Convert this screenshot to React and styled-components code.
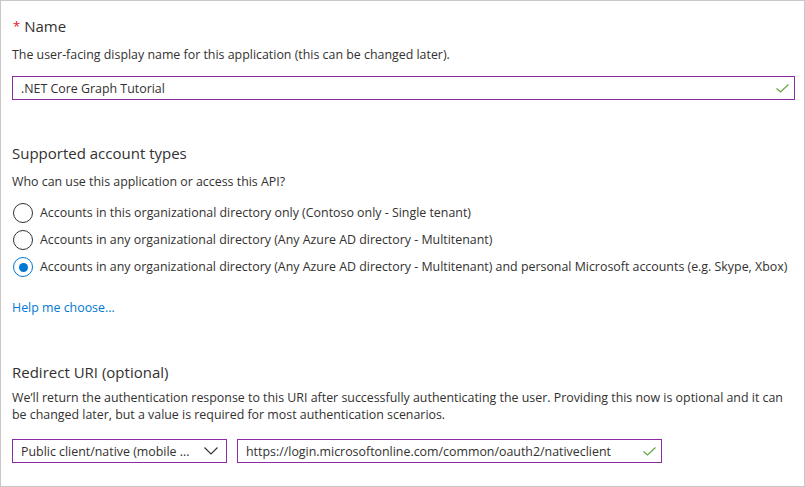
import React from "react";
import styled, { createGlobalStyle } from "styled-components";

//Styles//
const GlobalStyle = createGlobalStyle`
  html, body {
    margin: 0;
    padding: 0;
    background: #ffffff;
  }
  body {
    font-family: "Open Sans", "Noto Sans", Arial, sans-serif;
    color: #323130;
  }
`;

const Frame = styled.div`
  width: 805px;
  height: 487px;
  box-sizing: border-box;
  border: 1px solid #c8c8c8;
  padding: 0 9px 0 11px;
  display: flex;
  flex-direction: column;
`;

const Section = styled.section`
  display: flex;
  flex-direction: column;
  margin-top: ${(p) => p.$top}px;
`;

const Title = styled.h2`
  margin: 0;
  font-size: 15px;
  font-weight: 400;
  line-height: 20px;
  color: #323130;
  display: flex;
  align-items: center;
`;

const Required = styled.span`
  color: #e81123;
  font-size: 13px;
  margin-right: 4px;
  margin-left: 1px;
`;

const Desc = styled.p`
  margin: ${(p) => p.$top}px 0 0;
  font-size: 12.4px;
  line-height: 17px;
  color: #323130;
`;

const TextField = styled.div`
  box-sizing: border-box;
  height: 24px;
  width: ${(p) => (p.$width ? `${p.$width}px` : "100%")};
  margin-top: ${(p) => p.$top || 0}px;
  border: 1px solid #8a2da5;
  display: flex;
  align-items: center;
  justify-content: space-between;
  padding: 0 5px 0 8px;
  font-size: 12.4px;
  color: #323130;
`;

const Check = () => (
  <svg width="13" height="9" viewBox="0 0 13 9">
    <polyline
      points="0.5,4.5 4.5,8 12.5,0.5"
      fill="none"
      stroke="#5ea83e"
      strokeWidth="1.2"
    />
  </svg>
);

const Chevron = () => (
  <svg width="14" height="8" viewBox="0 0 14 8">
    <polyline
      points="0.5,0.5 7,7 13.5,0.5"
      fill="none"
      stroke="#323130"
      strokeWidth="1.1"
    />
  </svg>
);

const RadioList = styled.div`
  display: flex;
  flex-direction: column;
  gap: 7px;
  margin-top: 13px;
`;

const RadioRow = styled.label`
  display: flex;
  align-items: center;
  gap: 7px;
  font-size: 12.4px;
  line-height: 20px;
  color: #323130;
  padding-left: 1px;
`;

const Circle = styled.span`
  box-sizing: border-box;
  width: 20px;
  height: 20px;
  border-radius: 50%;
  border: 1px solid ${(p) => (p.$checked ? "#0078d4" : "#323130")};
  display: flex;
  align-items: center;
  justify-content: center;
  flex-shrink: 0;
  &::after {
    content: "";
    display: ${(p) => (p.$checked ? "block" : "none")};
    width: 9px;
    height: 9px;
    border-radius: 50%;
    background: #0078d4;
  }
`;

const HelpLink = styled.a`
  margin-top: 22px;
  font-size: 12.4px;
  line-height: 17px;
  color: #0078d4;
  text-decoration: none;
  cursor: pointer;
`;

const FieldRow = styled.div`
  display: flex;
  gap: 10px;
  margin-top: 16px;
`;

const Select = styled(TextField)`
  padding: 0 8px 0 8px;
`;

const accountTypes = [
  {
    id: "single",
    label:
      "Accounts in this organizational directory only (Contoso only - Single tenant)",
  },
  {
    id: "multi",
    label:
      "Accounts in any organizational directory (Any Azure AD directory - Multitenant)",
  },
  {
    id: "multiPersonal",
    label:
      "Accounts in any organizational directory (Any Azure AD directory - Multitenant) and personal Microsoft accounts (e.g. Skype, Xbox)",
  },
];

export default function App() {
  const selected = "multiPersonal";

  return (
    <React.Fragment>
      <GlobalStyle />
      <Frame>
        <Section $top={15}>
          <Title>
            <Required>*</Required>Name
          </Title>
          <Desc $top={10}>
            The user-facing display name for this application (this can be
            changed later).
          </Desc>
          <TextField $top={13}>
            <span>.NET Core Graph Tutorial</span>
            <Check />
          </TextField>
        </Section>

        <Section $top={43}>
          <Title>Supported account types</Title>
          <Desc $top={10}>Who can use this application or access this API?</Desc>
          <RadioList>
            {accountTypes.map((type) => (
              <RadioRow key={type.id}>
                <Circle $checked={type.id === selected} />
                {type.label}
              </RadioRow>
            ))}
          </RadioList>
          <HelpLink>Help me choose...</HelpLink>
        </Section>

        <Section $top={46}>
          <Title>Redirect URI (optional)</Title>
          <Desc $top={7}>
            We’ll return the authentication response to this URI after
            successfully authenticating the user. Providing this now is optional
            and it can be changed later, but a value is required for most
            authentication scenarios.
          </Desc>
          <FieldRow>
            <Select $width={215}>
              <span>Public client/native (mobile ...</span>
              <Chevron />
            </Select>
            <TextField $width={425}>
              <span>https://login.microsoftonline.com/common/oauth2/nativeclient</span>
              <Check />
            </TextField>
          </FieldRow>
        </Section>
      </Frame>
    </React.Fragment>
  );
}
